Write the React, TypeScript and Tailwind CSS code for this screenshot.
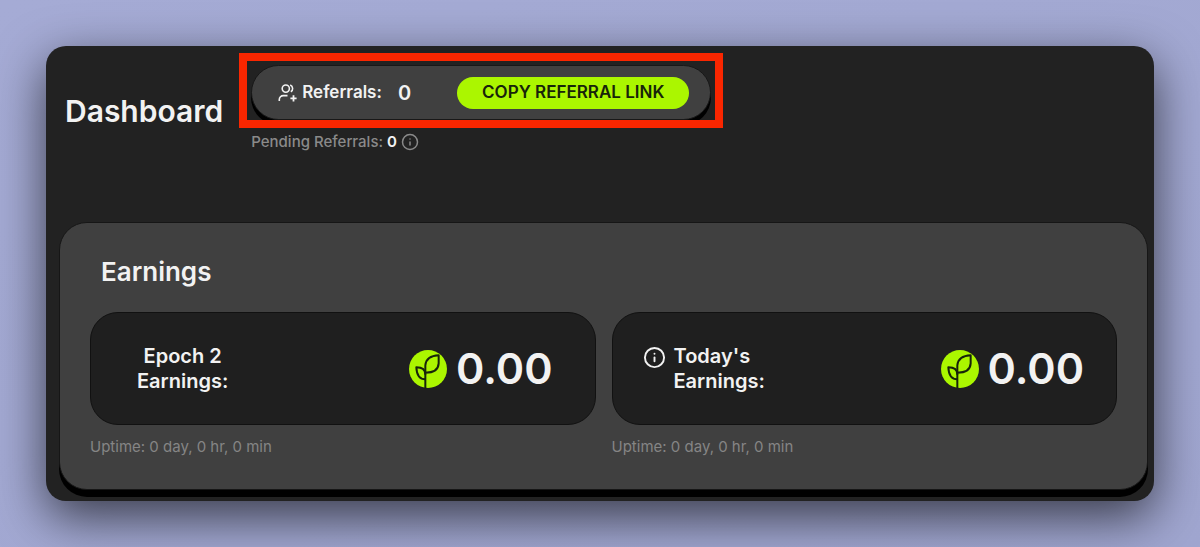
import { Info } from "lucide-react";

const earnings = [
  { lines: ["Epoch 2", "Earnings:"], value: "0.00", uptime: "0 day, 0 hr, 0 min", info: false },
  { lines: ["Today's", "Earnings:"], value: "0.00", uptime: "0 day, 0 hr, 0 min", info: true },
];

function UsersPlusIcon() {
  return (
    <svg
      viewBox="0 0 20 19"
      className="h-[19px] w-5 shrink-0"
      fill="none"
      stroke="currentColor"
      strokeWidth="1.6"
      strokeLinejoin="round"
      aria-hidden="true"
    >
      <circle cx="7.8" cy="5.6" r="3.6" />
      <path d="M12.2 2a3.8 3.8 0 0 1 .6 6.8" />
      <path d="M1.3 18v-1.4a4 4 0 0 1 4-4h4.2" />
      <path d="M15.5 12.2v6.2M12.4 15.3h6.2" strokeWidth="1.8" />
    </svg>
  );
}

function LeafCoin() {
  return (
    <svg viewBox="0 0 120 120" className="size-10 shrink-0" aria-hidden="true">
      <circle cx="60" cy="60" r="57" fill="#abf600" />
      <g fill="none" stroke="#17240a" strokeWidth="6" strokeLinejoin="round">
        <path d="M52 118V49C54 31 68 20 92 19V43C91 61 77 71 52 71" />
        <path d="M52 91C34 91 26 80 25 55C41 55 52 62 52 77" />
      </g>
    </svg>
  );
}

function EarningsCard({ lines, value, uptime, info }: (typeof earnings)[number]) {
  return (
    <div>
      <div
        className={`flex h-[113px] items-center justify-between rounded-[28px] border border-[#111] bg-[#1f1f1f] pl-[30px] ${
          info ? "pr-8" : "pr-[42px]"
        }`}
      >
        <div className="flex items-start gap-2">
          {info && <Info className="mt-0.5 size-[23px]" strokeWidth={2} />}
          <h3
            className={`text-[20px] leading-[25px] font-semibold ${
              info ? "text-left" : "pl-4 text-center"
            }`}
          >
            {lines[0]}
            <br />
            {lines[1]}
          </h3>
        </div>
        <div className="flex items-center gap-2">
          <LeafCoin />
          <span className="text-[43px] leading-none font-semibold">{value}</span>
        </div>
      </div>
      <p className="mt-3 text-[15px] leading-5 text-[#858585]">Uptime: {uptime}</p>
    </div>
  );
}

export default function App() {
  return (
    <div className="min-h-screen bg-linear-to-br from-[#a5abd5] to-[#a0a6d0] p-[46px] font-['Inter',sans-serif] text-[#f2f2f2]">
      <main className="rounded-[20px] bg-[#222] pt-[7px] pr-1.5 pb-[11px] pl-[13px] shadow-[0_16px_50px_rgba(0,0,0,0.65)]">
        <header className="flex h-[169px] items-start gap-4 pl-1.5">
          <h1 className="mt-10 text-[30px] leading-[36px] font-semibold">Dashboard</h1>

          <div>
            <div className="overflow-hidden border-8 border-[#fa2600] px-1 pt-1">
              <div className="flex h-[55px] w-[460px] items-center rounded-full border border-[#181818] bg-[#404040] pr-[21px] pl-[26px] shadow-[0_5px_0_#000]">
                <UsersPlusIcon />
                <span className="ml-1 text-[17px] font-semibold">Referrals:</span>
                <span className="ml-4 text-[20px] font-semibold">0</span>
                <button
                  type="button"
                  className="ml-auto h-8 w-[232px] rounded-full bg-[#abf600] text-[17px] font-semibold text-[#17240a]"
                >
                  COPY REFERRAL LINK
                </button>
              </div>
            </div>
            <p className="mt-1 flex items-center gap-1 pl-3 text-[15px] leading-5 font-medium text-[#8a8a8a]">
              Pending Referrals:
              <span className="font-semibold text-[#f2f2f2]">0</span>
              <Info className="size-[18px]" strokeWidth={2} />
            </p>
          </div>
        </header>

        <section className="rounded-[28px] border border-[#161616] bg-[#404040] px-[30px] pt-[33px] pb-8 shadow-[0_7px_0_#000]">
          <h2 className="pl-[11px] text-[26px] leading-8 font-semibold">Earnings</h2>
          <div className="mt-6 grid grid-cols-2 gap-4">
            {earnings.map((e) => (
              <EarningsCard key={e.lines[0]} {...e} />
            ))}
          </div>
        </section>
      </main>
    </div>
  );
}
